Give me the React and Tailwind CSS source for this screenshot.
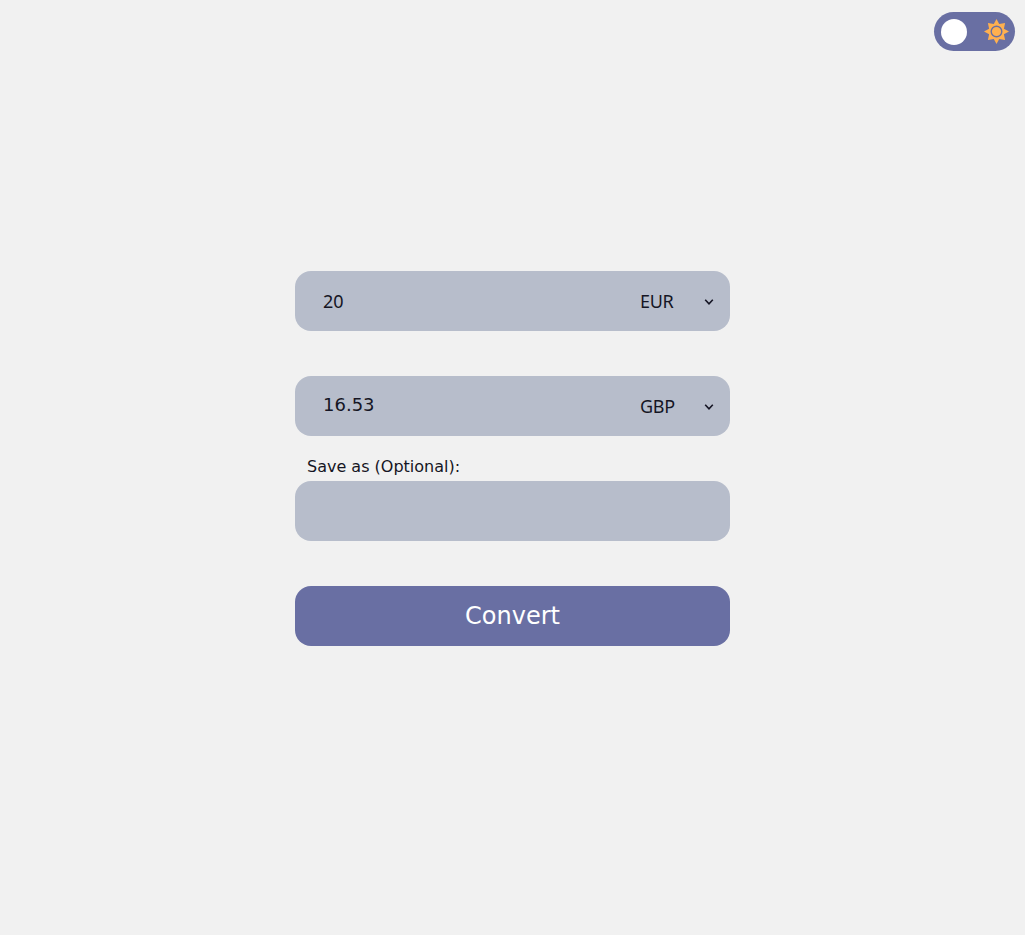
import { useState } from "react";

const currencies = ["EUR", "GBP", "USD"];

function CurrencySelect({ initial, label }) {
  const [value, setValue] = useState(initial);
  return (
    <div className="grid h-[58px] w-[80px] shrink-0 items-center">
      <select
        aria-label={label}
        value={value}
        onChange={(e) => setValue(e.target.value)}
        className="col-start-1 row-start-1 h-[58px] appearance-none bg-transparent pl-1 font-['Noto_Sans',sans-serif] text-[18px] tracking-[-0.3px] text-[#151524] outline-none"
      >
        {currencies.map((c) => (
          <option key={c}>{c}</option>
        ))}
      </select>
      <svg viewBox="0 0 10 6" className="pointer-events-none col-start-1 row-start-1 mt-px mr-[2px] h-[6px] w-[10px] justify-self-end" fill="none" stroke="#151524" strokeWidth="1.6">
        <path d="M1.2 .8 5 4.8 8.8 .8" />
      </svg>
    </div>
  );
}

function Sun() {
  return (
    <svg viewBox="-.5 .5 26 26" className="size-[26px]" fill="#ffb04f">
      <path d="M13 .5 15.7 5.6 21.6 4.4 20.4 10.3 25.5 13 20.4 15.7 21.6 21.6 15.7 20.4 13 25.5 10.3 20.4 4.4 21.6 5.6 15.7 .5 13 5.6 10.3 4.4 4.4 10.3 5.6Z" />
      <circle cx="13" cy="13" r="5.3" stroke="#696fa3" strokeWidth="1.4" />
    </svg>
  );
}

export default function App() {
  const [amount, setAmount] = useState("20");
  const [name, setName] = useState("");
  return (
    <main className="flex h-screen flex-col overflow-hidden bg-[#f1f1f1] font-['DejaVu_Sans',sans-serif] text-[#151524]">
      <header className="flex justify-end pt-3 pr-2.5">
        <button aria-label="Toggle theme" className="flex h-[39px] w-[81px] items-center justify-between rounded-full bg-[#696fa3] pr-[6px] pl-[7px]">
          <span className="size-[26px] rounded-full bg-white" />
          <Sun />
        </button>
      </header>
      <form className="mx-auto mt-[220px] flex w-[435px] flex-col" onSubmit={(e) => e.preventDefault()}>
        <div className="flex h-[60px] items-center rounded-2xl bg-[#b7bdcb] pr-[14px] pl-7">
          <input
            aria-label="Amount"
            value={amount}
            onChange={(e) => setAmount(e.target.value)}
            className="min-w-0 flex-1 bg-transparent font-['Noto_Sans',sans-serif] text-[18px] outline-none"
          />
          <CurrencySelect initial="EUR" label="From" />
        </div>
        <div className="mt-[45px] flex h-[60px] items-center rounded-2xl bg-[#b7bdcb] pr-[14px] pl-7">
          <output className="flex-1 pb-0.5 text-lg">16.53</output>
          <CurrencySelect initial="GBP" label="To" />
        </div>
        <label htmlFor="name" className="mt-[19px] ml-3 h-[26px] text-base">Save as (Optional):</label>
        <input
          id="name"
          value={name}
          onChange={(e) => setName(e.target.value)}
          className="h-[60px] rounded-2xl bg-[#b7bdcb] px-7 font-['Noto_Sans',sans-serif] text-[18px] outline-none"
        />
        <button className="mt-[45px] h-[60px] rounded-2xl bg-[#696fa3] text-2xl text-white">Convert</button>
      </form>
    </main>
  );
}
